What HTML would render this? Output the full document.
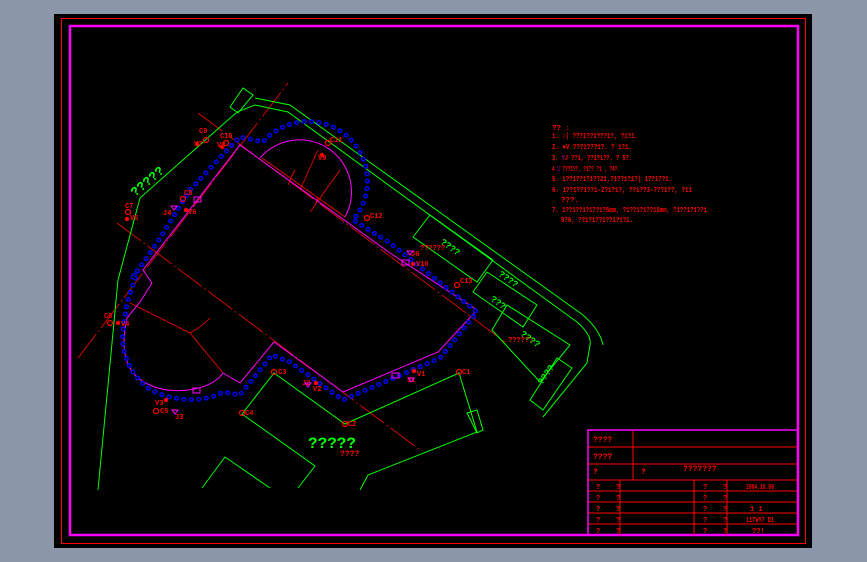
<!DOCTYPE html>
<html><head><style>
html,body{margin:0;padding:0;width:867px;height:562px;overflow:hidden;background:#8b97a8;}
svg{position:absolute;left:0;top:0}
text{font-family:"Liberation Mono",monospace;font-weight:bold;}
</style></head><body>
<svg width="867" height="562" viewBox="0 0 867 562">
<rect x="54" y="14" width="758" height="534" fill="#000"/>
<rect x="61.5" y="18.5" width="744" height="525" fill="none" stroke="#f00" stroke-width="1"/>
<rect x="70" y="26" width="728" height="509" fill="none" stroke="#f0f" stroke-width="2.5"/>

<g stroke="#f00" stroke-width="0.8" fill="none" stroke-dasharray="30 3 2 3">
<line x1="78" y1="358" x2="288" y2="83"/>
<line x1="198" y1="113" x2="505" y2="342"/>
<line x1="117" y1="223" x2="420" y2="450"/>
</g>
<g stroke="#f00" stroke-width="0.8" fill="none">
<polyline points="130,303 190,333 223,373"/>
<path d="M190,333 Q200,328 210,318"/>
<line x1="262" y1="158" x2="345" y2="217"/>
<line x1="300" y1="190" x2="318" y2="150"/>
<line x1="315" y1="205" x2="340" y2="170"/>
<path d="M288,185 Q292,175 295,170"/>
<path d="M310,212 Q316,205 318,198"/>
</g>

<g stroke="#0f0" stroke-width="1" fill="none">
<polyline points="98,490 118,280 140,198 237,112 255,105"/>
<polygon points="230,107 243,88 253,95 238,113"/>
<path d="M255,98 L290,105 L583,315 Q600,330 603,345"/>
<path d="M255,105 L288,112 L577,322 Q592,335 590,345 L587,363 L543,417"/>
<polygon points="413,237 430,215 493,260 477,282"/>
<polygon points="473,292 487,272 537,305 523,327"/>
<polygon points="492,330 507,305 570,345 540,382"/>
<polygon points="530,400 557,358 572,368 543,410"/>
<polyline points="298,488 315,466 242,414 274,373 345,424 459,373 477,432 368,475 360,490"/>
<polygon points="467,413 477,410 483,430 477,433"/>
<polyline points="202,488 225,457 270,488"/>
</g>

<g stroke="#f0f" stroke-width="1" fill="none">
<path d="M143,270 L152,283 L140,302 L127,318 C120,350 125,375 150,385 C170,395 210,392 223,373 L240,383 L274,342 L343,392 L438,352 L477,310 L390,253 L240,145 Z"/>
<path d="M260,158 A52,52 0 0 1 345,217"/>
</g>

<path id="bd" d="M133,277 L157,243 L190,190 L230,147 L240,137 L263,142 A58,58 0 0 1 353,220 L390,243 L477,312 L440,358 L343,400 L290,362 L272,355 L240,395 L223,392 C200,405 167,400 148,388 C130,375 120,350 123,330 L127,303 L138,270 Z" fill="none" stroke="#00f" stroke-width="5" stroke-linecap="round" stroke-dasharray="0 7.5"/>
<path d="M133,277 L157,243 L190,190 L230,147 L240,137 L263,142 A58,58 0 0 1 353,220 L390,243 L477,312 L440,358 L343,400 L290,362 L272,355 L240,395 L223,392 C200,405 167,400 148,388 C130,375 120,350 123,330 L127,303 L138,270 Z" fill="none" stroke="#000" stroke-width="2.2" stroke-linecap="round" stroke-dasharray="0 7.5"/>

<g fill="none" stroke="#f00" stroke-width="1.2">
<circle cx="206" cy="140" r="2.5"/><circle cx="226" cy="143" r="2.5"/><circle cx="183" cy="199" r="2.5"/>
<circle cx="128" cy="212" r="2.5"/><circle cx="110" cy="323" r="2.5"/><circle cx="156" cy="411" r="2.5"/>
<circle cx="242" cy="413" r="2.5"/><circle cx="274" cy="372" r="2.5"/><circle cx="345" cy="424" r="2.5"/>
<circle cx="459" cy="372" r="2.5"/><circle cx="457" cy="285" r="2.5"/><circle cx="367" cy="218" r="2.5"/>
<circle cx="328" cy="143" r="2.5"/>
</g>
<g fill="#f00" font-size="7">
<text x="199" y="133">C9</text><text x="220" y="138">C10</text><text x="184" y="195">C8</text>
<text x="125" y="208">C7</text><text x="104" y="318">C6</text><text x="160" y="413">C5</text>
<text x="245" y="415">C4</text><text x="278" y="374">C3</text><text x="348" y="426">C2</text>
<text x="462" y="374">C1</text><text x="460" y="283">C13</text><text x="370" y="218">C12</text>
<text x="330" y="142">C11</text>
<text x="194" y="146">V7</text><text x="217" y="147">V8</text><text x="188" y="214">V6</text>
<text x="130" y="220">V5</text><text x="121" y="326">V4</text><text x="155" y="405">V3</text>
<text x="313" y="391">V2</text><text x="417" y="376">V1</text><text x="416" y="266">V10</text>
<text x="318" y="160">V9</text>
<text x="163" y="215">J4</text><text x="175" y="419">J3</text><text x="302" y="385">J2</text>
<text x="407" y="382">J1</text><text x="411" y="256">J6</text>
<text x="340" y="456" font-size="8">????</text>
<text x="420" y="250" font-size="7">??????</text>
<text x="508" y="342" font-size="7">??????</text>
</g>
<g fill="#f00"><circle cx="197" cy="144" r="2.2"/><circle cx="222" cy="147" r="2.2"/><circle cx="186" cy="210" r="2.2"/><circle cx="127" cy="219" r="2.2"/><circle cx="118" cy="323" r="2.2"/><circle cx="166" cy="400" r="2.2"/><circle cx="316" cy="383" r="2.2"/><circle cx="414" cy="371" r="2.2"/><circle cx="413" cy="264" r="2.2"/><circle cx="322" cy="155" r="2.2"/></g>
<g fill="none" stroke="#f0f" stroke-width="1">
<rect x="193" y="388" width="7" height="5"/><rect x="392" y="373" width="7" height="5"/><rect x="194" y="197" width="7" height="5"/><rect x="402" y="260" width="7" height="5"/>
<path d="M171,206 h6 l-3,4 z"/><path d="M172,410 h6 l-3,4 z"/><path d="M305,383 h6 l-3,4 z"/><path d="M408,378 h6 l-3,4 z"/><path d="M407,251 h6 l-3,4 z"/>
</g>

<g fill="#0f0">
<text x="0" y="0" font-size="13" transform="translate(135,197) rotate(-40)">?????</text>
<text x="308" y="448" font-size="16">?????</text>
<text x="0" y="0" font-size="9" transform="translate(440,243) rotate(36)">????</text>
<text x="0" y="0" font-size="9" transform="translate(498,275) rotate(36)">????</text>
<text x="0" y="0" font-size="9" transform="translate(490,300) rotate(36)">???</text>
<text x="0" y="0" font-size="9" transform="translate(520,335) rotate(36)">????</text>
<text x="0" y="0" font-size="9" transform="translate(542,385) rotate(-55)">????</text>
</g>

<g fill="#f00" font-size="7.5" lengthAdjust="spacingAndGlyphs">
<text x="552" y="130">?? :</text>
<text x="552" y="138" textLength="86" lengthAdjust="spacingAndGlyphs">1. ○( ???1??1???1?, ?1?1.</text>
<text x="552" y="149" textLength="80" lengthAdjust="spacingAndGlyphs">2. ●V ???1???1?. ?    1?1.</text>
<text x="552" y="160" textLength="80" lengthAdjust="spacingAndGlyphs">3. <tspan fill="#f0f">▽</tspan>J ??1, ??1?1??. ?    5?.</text>
<text x="552" y="171" textLength="68" lengthAdjust="spacingAndGlyphs">4 <tspan fill="#f0f">□</tspan> ???1??, ?1??  ?1 , ?4?.</text>
<text x="552" y="181" textLength="120" lengthAdjust="spacingAndGlyphs">5. 1??1??1?1??21,?1??1?1?) 1??1??1.</text>
<text x="552" y="192" textLength="140" lengthAdjust="spacingAndGlyphs">6. 1??1??1??1-2?1?1?, ??1??3-7??1??, ?11</text>
<text x="561" y="202">???.</text>
<text x="552" y="212" textLength="155" lengthAdjust="spacingAndGlyphs">7. 1??1??1?1??1?5mm, ?1??1?1??15mm, ?1??1?1??1</text>
<text x="561" y="222" textLength="72" lengthAdjust="spacingAndGlyphs">9?6, ??1?1??1??1?1?1.</text>
</g>

<g stroke="#f00" stroke-width="1" fill="none">
<line x1="588" y1="447" x2="797" y2="447"/>
<line x1="588" y1="464" x2="797" y2="464"/>
<line x1="588" y1="480" x2="797" y2="480"/>
<line x1="588" y1="491" x2="797" y2="491"/>
<line x1="588" y1="502" x2="797" y2="502"/>
<line x1="588" y1="513" x2="797" y2="513"/>
<line x1="588" y1="524" x2="797" y2="524"/>
<line x1="633" y1="430" x2="633" y2="480"/>
<line x1="620" y1="480" x2="620" y2="535"/>
<line x1="694" y1="480" x2="694" y2="535"/>
<line x1="727" y1="480" x2="727" y2="535"/>
</g>
<path d="M588,535 V430 H797" fill="none" stroke="#f0f" stroke-width="1.5"/>
<g fill="#f00" font-size="8">
<text x="593" y="442">????</text><text x="593" y="459">????</text>
<text x="593" y="474">?</text><text x="641" y="474">?</text><text x="683" y="471">???????</text>
<g font-size="7">
<text x="596" y="489">?</text><text x="616" y="489">?</text><text x="703" y="489">?</text><text x="723" y="489">?</text>
<text x="596" y="500">?</text><text x="616" y="500">?</text><text x="703" y="500">?</text><text x="723" y="500">?</text>
<text x="596" y="511">?</text><text x="616" y="511">?</text><text x="703" y="511">?</text><text x="723" y="511">?</text>
<text x="596" y="522">?</text><text x="616" y="522">?</text><text x="703" y="522">?</text><text x="723" y="522">?</text>
<text x="596" y="533">?</text><text x="616" y="533">?</text><text x="703" y="533">?</text><text x="723" y="533">?</text>
<text x="746" y="489" textLength="28" lengthAdjust="spacingAndGlyphs">2004.10.08</text>
<text x="750" y="511">1 1</text>
<text x="746" y="522" textLength="28" lengthAdjust="spacingAndGlyphs">11TWY7 D1</text>
<text x="752" y="533">??!</text>
</g>
</g>
</svg>
</body></html>
